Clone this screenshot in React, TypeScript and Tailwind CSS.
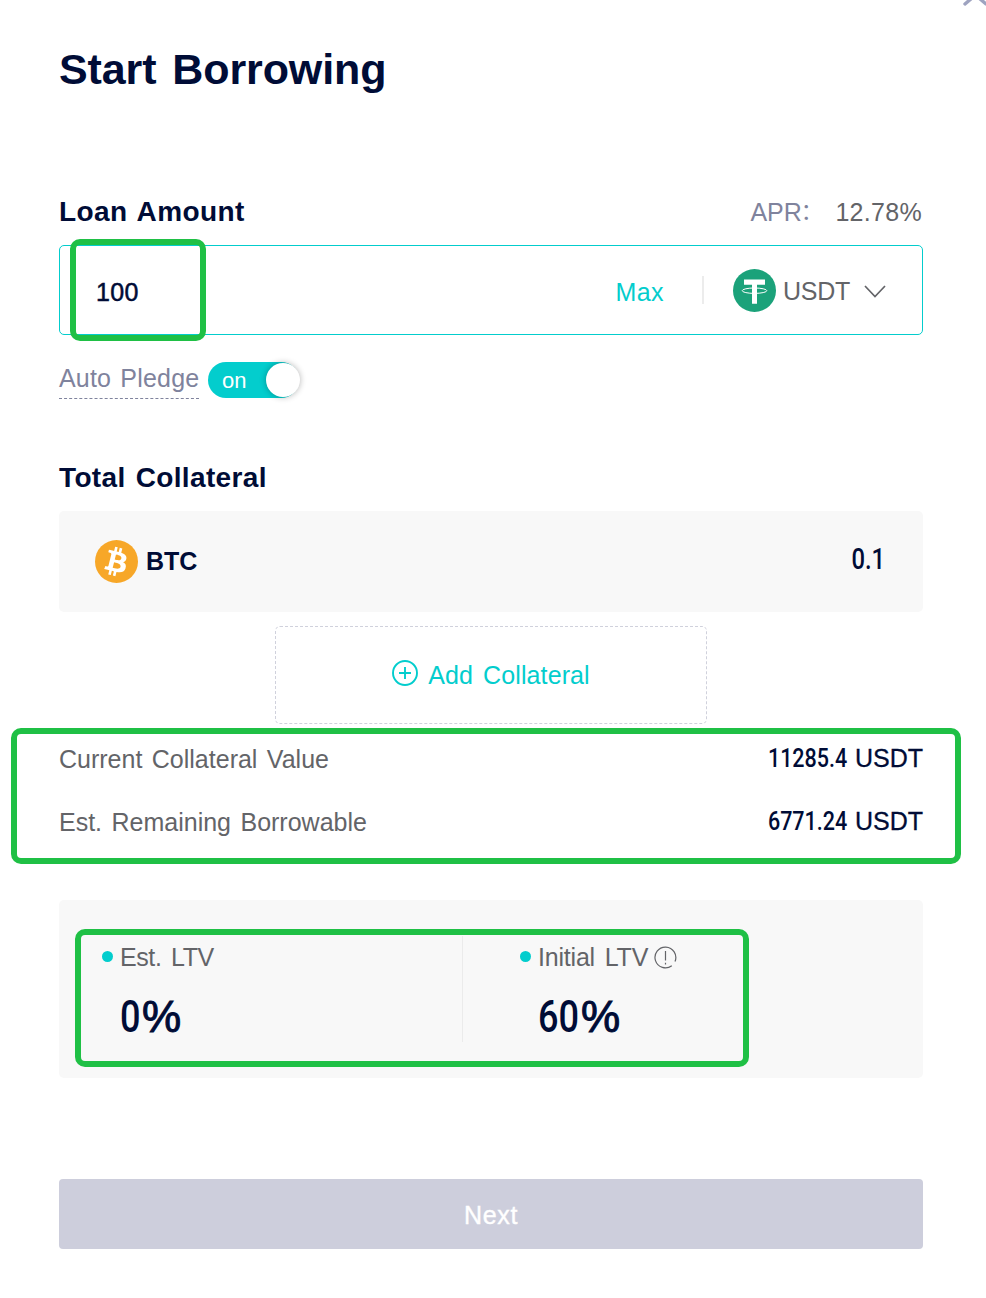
import { useState } from 'react'

function TetherIcon() {
  return (
    <svg width="43" height="43" viewBox="0 0 43 43">
      <circle cx="21.5" cy="21.5" r="21.5" fill="#1ba27a" />
      <path d="M11 10.4h21v5.4h-8v19h-5v-19h-8z" fill="#fff" />
      <ellipse cx="21.5" cy="21.7" rx="12.3" ry="2.7" fill="none" stroke="#fff" strokeWidth="1" />
    </svg>
  )
}

function BitcoinIcon() {
  return (
    <svg width="43" height="43" viewBox="0 0 32 32">
      <circle cx="16" cy="16" r="16" fill="#f7a728" />
      <path
        transform="translate(16 16) scale(1.1) translate(-16.5 -16)"
        fill="#fff"
        d="M23.189 14.02c.314-2.096-1.283-3.223-3.465-3.975l.708-2.84-1.728-.43-.69 2.765c-.454-.114-.92-.22-1.385-.326l.695-2.783L15.596 6l-.708 2.839c-.376-.086-.746-.17-1.104-.26l.002-.009-2.384-.595-.46 1.846s1.283.294 1.256.312c.7.175.826.638.805 1.006l-.806 3.235c.048.012.11.03.18.057l-.183-.045-1.13 4.532c-.086.212-.303.531-.793.41.018.025-1.256-.313-1.256-.313l-.858 1.978 2.25.561c.418.105.828.215 1.231.318l-.715 2.872 1.727.43.708-2.84c.472.127.93.245 1.378.357l-.706 2.828 1.728.43.715-2.866c2.948.558 5.164.333 6.097-2.333.752-2.146-.037-3.385-1.588-4.192 1.13-.26 1.98-1.003 2.207-2.538zm-3.95 5.538c-.533 2.147-4.148.986-5.32.695l.95-3.805c1.172.293 4.929.872 4.37 3.11zm.535-5.569c-.487 1.953-3.495.96-4.47.717l.86-3.45c.975.243 4.118.696 3.61 2.733z"
      />
    </svg>
  )
}

function InfoIcon() {
  return (
    <svg className="mt-0.5" width="23" height="23" viewBox="0 0 23 23" fill="none" stroke="#636468" strokeWidth="1.2">
      <path d="M17.8 19.7A10.4 10.4 0 1 1 21 15.5" />
      <path d="M11.5 5v9.5M11.5 16.8v1.7" />
    </svg>
  )
}

const rows = [
  { label: 'Current Collateral Value', value: '11285.4' },
  { label: 'Est. Remaining Borrowable', value: '6771.24' },
]

export default function App() {
  const [amount, setAmount] = useState('100')
  const [auto, setAuto] = useState(true)

  return (
    <main className="relative w-[986px] h-[1298px] overflow-hidden bg-white pl-[59px] pr-[63px] pt-[45px] text-[25px] text-[#636468] font-['Liberation_Sans','Noto_Sans_CJK_SC',sans-serif]">
      <svg className="absolute right-0 top-0" width="26" height="10" viewBox="0 0 26 10" stroke="#9ea3c0" strokeWidth="3.4" strokeLinecap="round">
        <path d="M5 4 L15.5 -5 L26 4" fill="none" />
      </svg>

      <h1 className="h-12 leading-[48px] text-[43px] font-bold text-[#000c36] tracking-[-0.1px] [word-spacing:4px]">Start Borrowing</h1>

      <div className="mt-[98px] h-10 pt-0.5 flex justify-between items-center leading-10">
        <h2 className="text-[28px] font-bold text-[#000c36] tracking-[0.4px] [word-spacing:2px]">Loan Amount</h2>
        <div className="flex">
          <span className="w-[85px] text-[#7f839d]">
            APR<span className="inline-block -translate-x-px -translate-y-0.5 text-[22px] leading-none">：</span>
          </span>
          <span className="tracking-[0.3px] pr-px">12.78%</span>
        </div>
      </div>

      <div className="mt-[14px] h-[90px] flex items-center border border-[#03cdcd] rounded-[5px] pl-9 pr-9">
        <input
          className="w-[300px] h-12 pt-1 outline-none text-[#000c36] tracking-[0.3px] [-webkit-text-stroke:0.5px]"
          value={amount}
          onChange={(e) => setAmount(e.target.value)}
        />
        <button className="ml-auto pt-1.5 text-[#03cdcd] tracking-[0.4px]">Max</button>
        <div className="ml-[38px] mr-[29px] w-[2px] h-7 bg-[#ececec]" />
        <TetherIcon />
        <span className="ml-[7px] w-[81px] pt-1 tracking-[-0.3px]">USDT</span>
        <svg className="mt-0.5" width="22" height="13" viewBox="0 0 22 13" fill="none" stroke="#636468" strokeWidth="1.7">
          <path d="M1 1 L11 11.5 L21 1" />
        </svg>
      </div>

      <div className="mt-[27px] h-[37px] flex">
        <span className="w-[140px] h-[37px] leading-[33px] whitespace-nowrap text-[#7f839d] tracking-[0.2px] [word-spacing:2px] border-b border-dashed border-[#7f839d]">Auto Pledge</span>
        <button
          className="ml-[9px] w-[91px] h-9 rounded-full bg-[#03cdcd] flex items-center pl-[14px] text-white text-[22px]"
          onClick={() => setAuto(!auto)}
        >
          <span>{auto ? 'on' : 'off'}</span>
          <span className="ml-auto -mr-px size-[34px] rounded-full bg-white shadow-[0_0_6px_rgba(0,0,0,0.3)]" />
        </button>
      </div>

      <h2 className="mt-[58px] h-10 leading-[41px] text-[28px] font-bold text-[#000c36] tracking-[0.35px] [word-spacing:2px]">Total Collateral</h2>
      <div className="mt-[14px] h-[101px] flex items-center rounded-[5px] bg-[#f8f8f8] pl-9 pr-[38px] text-[#000c36]">
        <BitcoinIcon />
        <span className="ml-2 font-bold">BTC</span>
        <span className="ml-auto pb-1 origin-right scale-x-[0.82] text-[29px] font-medium font-[Roboto,sans-serif]">0.1</span>
      </div>

      <button className="mt-[14px] mx-auto w-[432px] h-[98px] flex items-center justify-center rounded-[5px] border border-dashed border-[#d0d1dc] text-[#03cdcd]">
        <svg className="mr-[10px] mb-1" width="26" height="26" viewBox="0 0 26 26" fill="none" stroke="#03cdcd" strokeWidth="1.9">
          <circle cx="13" cy="13" r="12" />
          <path d="M13 7v12M7 13h12" />
        </svg>
        <span className="pt-0.5 tracking-[0.1px] [word-spacing:3px]">Add Collateral</span>
      </button>

      <div className="mt-[15px] flex flex-col gap-[23px]">
        {rows.map((row) => (
          <div key={row.label} className="h-10 leading-10 flex justify-between">
            <span className="[word-spacing:2.5px]">{row.label}</span>
            <span className="flex -mt-px text-[#000c36]">
              <span className="pt-px origin-right scale-x-[0.86] font-medium font-[Roboto,sans-serif]">{row.value}</span>
              <span className="ml-2 [-webkit-text-stroke:0.3px]">USDT</span>
            </span>
          </div>
        ))}
      </div>

      <div className="mt-[58px] h-[178px] flex pt-9 pl-[43px] rounded-[5px] bg-[#f8f8f8]">
        <div className="w-[360px]">
          <div className="h-10 flex items-center">
            <span className="size-[11px] rounded-full bg-[#03cdcd]" />
            <span className="ml-[7px] pt-1 tracking-[-0.4px] [word-spacing:3px]">Est. LTV</span>
          </div>
          <div className="mt-[13px] ml-[18px] flex h-14 leading-[56px] text-[#000c36] text-[44px]">
            <span className="w-[22px] origin-left scale-x-[0.82] font-medium font-[Roboto,sans-serif]">0</span>
            <span className="[-webkit-text-stroke:1px]">%</span>
          </div>
        </div>
        <div className="h-[106px] border-l border-[#ebebeb] pl-[57px]">
          <div className="h-10 flex items-center">
            <span className="size-[11px] rounded-full bg-[#03cdcd]" />
            <span className="ml-[7px] mr-[6px] pt-1 tracking-[-0.2px] [word-spacing:3px]">Initial LTV</span>
            <InfoIcon />
          </div>
          <div className="mt-[13px] ml-[18px] flex h-14 leading-[56px] text-[#000c36] text-[44px]">
            <span className="w-[43px] origin-left scale-x-[0.82] font-medium font-[Roboto,sans-serif]">60</span>
            <span className="[-webkit-text-stroke:1px]">%</span>
          </div>
        </div>
      </div>

      <button className="mt-[101px] w-full h-[70px] pt-1 rounded-[4px] bg-[#cdcedc] text-white tracking-[0.7px] [-webkit-text-stroke:0.4px]">Next</button>

      {/* highlight frames */}
      <div className="absolute left-[70px] top-[239px] w-[136px] h-[102px] rounded-[10px] border-[6px] border-[#1fc045]" />
      <div className="absolute left-[11px] top-[728px] w-[950px] h-[136px] rounded-[10px] border-[6px] border-[#1fc045]" />
      <div className="absolute left-[75px] top-[929px] w-[674px] h-[138px] rounded-[10px] border-[6px] border-[#1fc045]" />
    </main>
  )
}
